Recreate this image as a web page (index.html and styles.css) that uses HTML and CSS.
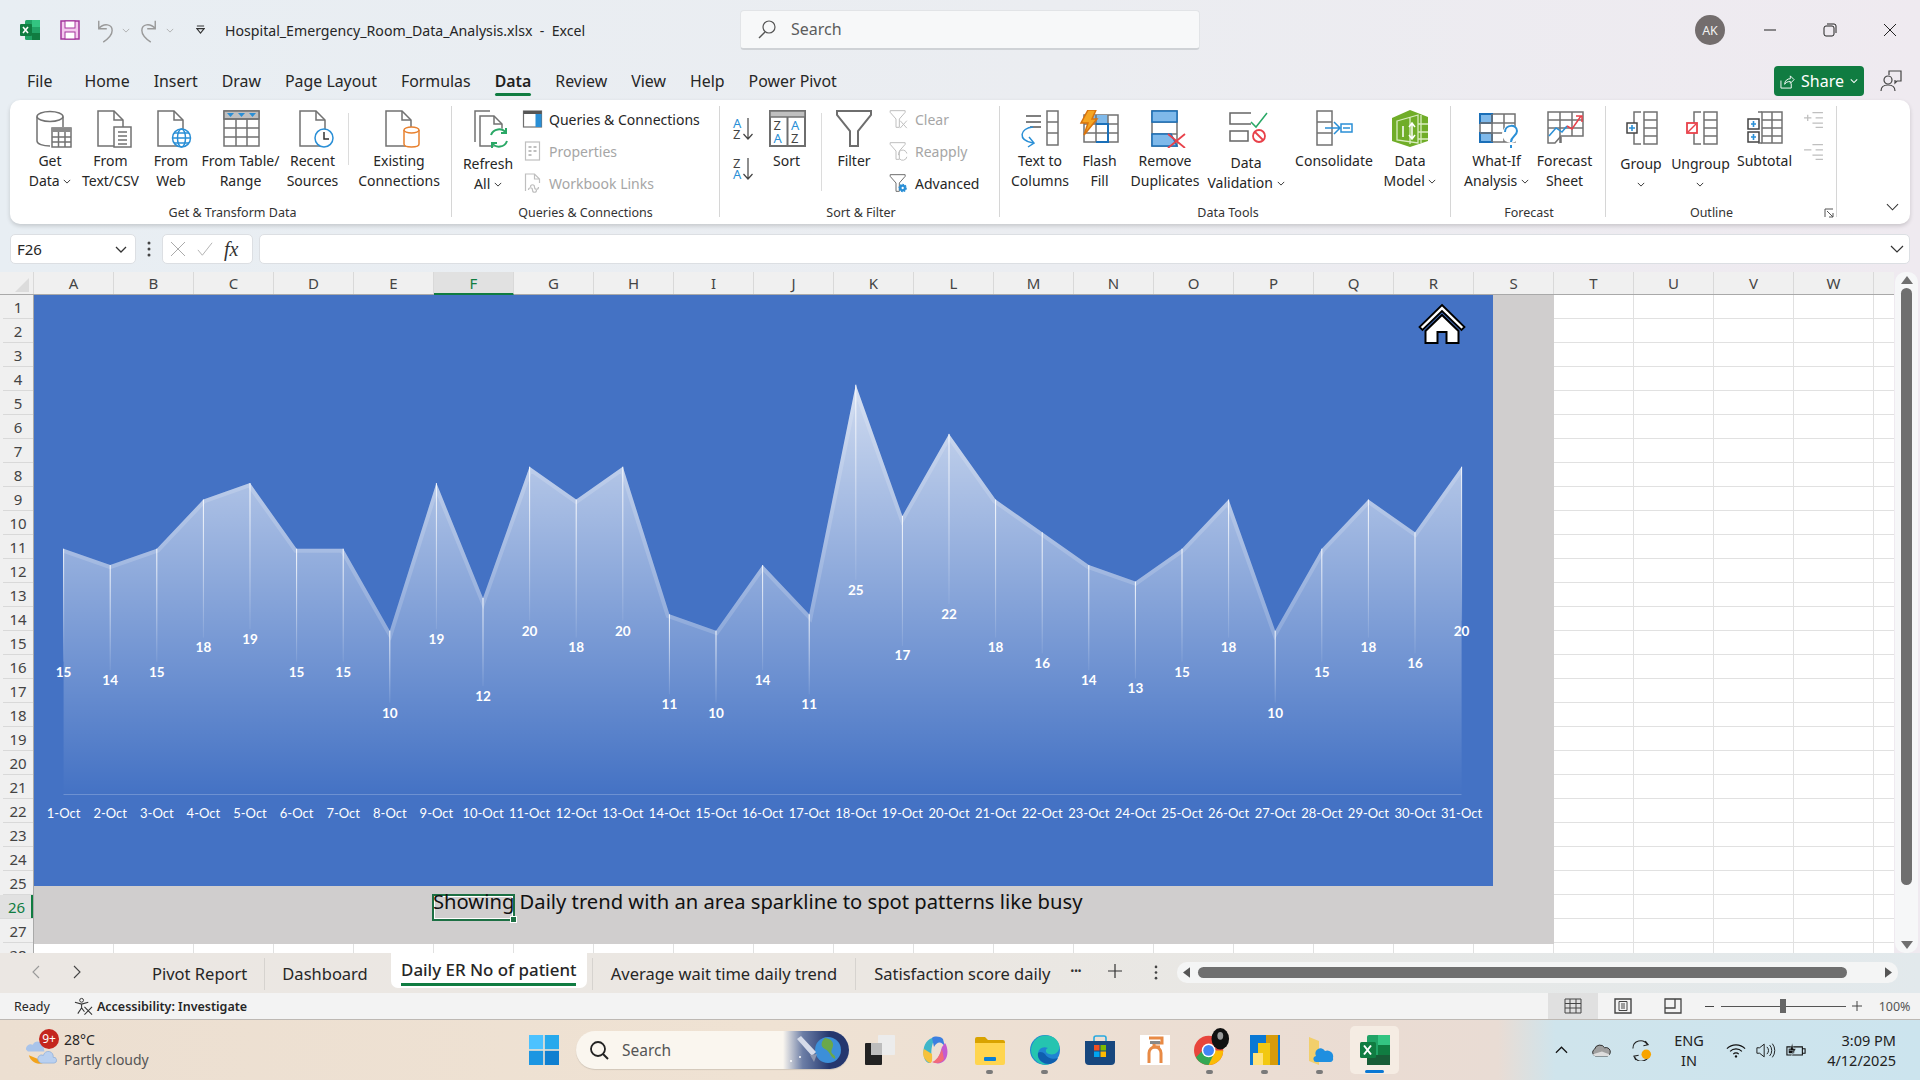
FILE: index.html
```html
<!DOCTYPE html>
<html lang="en">
<head>
<meta charset="utf-8">
<title>Hospital_Emergency_Room_Data_Analysis.xlsx - Excel</title>
<link rel="stylesheet" href="styles.css">
</head>
<body>
<svg class="defs" aria-hidden="true">
  <symbol id="doc" viewBox="0 0 44 38"><path class="w" d="M9 1H25L34 10V36H9Z"/><path d="M25 1V10H34"/></symbol>
  <symbol id="funnel" viewBox="0 0 24 24"><path d="M2 2H20V4L13 12V22H9V12L2 4Z"/></symbol>
  <linearGradient id="areaFill" x1="0" y1="0" x2="0" y2="1"><stop offset="0" stop-color="#fff" stop-opacity=".74"/><stop offset="1" stop-color="#fff" stop-opacity="0"/></linearGradient>
  <linearGradient id="dropFill" x1="0" y1="0" x2="0" y2="1"><stop offset="0" stop-color="#fff" stop-opacity=".95"/><stop offset="1" stop-color="#fff" stop-opacity=".08"/></linearGradient>
  <linearGradient id="spaceFill" x1="0" y1="0" x2="1" y2="0"><stop offset="0" stop-color="#2f4a86" stop-opacity="0"/><stop offset=".3" stop-color="#2f4a86" stop-opacity=".7"/><stop offset=".7" stop-color="#25376e"/></linearGradient>
  <clipPath id="areaClip"><polygon points="63.1,794.7 63.1,548.7 109.7,565.1 156.3,548.7 202.9,499.5 249.5,483.1 296.1,548.7 342.7,548.7 389.3,630.7 435.9,483.1 482.5,597.9 529.1,466.7 575.7,499.5 622.3,466.7 668.9,614.3 715.5,630.7 762.1,565.1 808.7,614.3 855.3,384.7 901.9,515.9 948.5,433.9 995.1,499.5 1041.7,532.3 1088.3,565.1 1134.9,581.5 1181.5,548.7 1228.1,499.5 1274.7,630.7 1321.3,548.7 1367.9,499.5 1414.5,532.3 1461.1,466.7 1461.1,794.7"/></clipPath>
</svg>

<header class="titlebar">
  <div class="qat">
    <svg class="q-xl" viewBox="0 0 20 20"><rect x="5" y="0" width="15" height="20" rx="1.5" fill="#21a366"/><rect x="12" y="0" width="8" height="7" fill="#33c481"/><rect x="12" y="13" width="8" height="7" fill="#107c41"/><rect x="0" y="4" width="12" height="12" rx="1" fill="#107c41"/><path d="M3 7l5 6M8 7l-5 6" stroke="#fff" stroke-width="1.6"/></svg>
    <svg class="q-save" viewBox="0 0 20 20"><path d="M1 1H19V19H1Z" fill="#f3c9ee" stroke="#a4359c" stroke-width="1.5"/><rect x="5" y="1" width="10" height="7" fill="#fff" stroke="#a4359c"/><rect x="5" y="12" width="10" height="7" fill="#fff" stroke="#a4359c"/></svg>
    <svg class="q-undo" viewBox="0 0 22 28"><path d="M4 3V12H13M4 12C10 5 19 7 19 14C19 19 15 23 9 27" fill="none" stroke="#9a9a9a" stroke-width="1.6"/></svg>
    <svg class="q-chev" viewBox="0 0 10 6"><path d="M1 1L5 5L9 1" fill="none" stroke="#a5a5a5"/></svg>
    <svg class="q-redo" viewBox="0 0 22 28"><path d="M18 3V12H9M18 12C12 5 3 7 3 14C3 19 7 23 13 27" fill="none" stroke="#9a9a9a" stroke-width="1.6"/></svg>
    <svg class="q-chev q-chev2" viewBox="0 0 10 6"><path d="M1 1L5 5L9 1" fill="none" stroke="#a5a5a5"/></svg>
    <svg class="q-cust" viewBox="0 0 10 11"><path d="M1 1H9M1 4L5 9L9 4Z" fill="none" stroke="#333" stroke-width="1.2"/></svg>
    <span class="doc-title">Hospital_Emergency_Room_Data_Analysis.xlsx&nbsp; -&nbsp; Excel</span>
  </div>
  <div class="searchbox">
    <svg viewBox="0 0 20 20"><circle cx="12" cy="8" r="6" fill="none" stroke="#555" stroke-width="1.2"/><path d="M8 13L2 19" stroke="#555" stroke-width="1.4"/></svg>
    <span>Search</span>
  </div>
  <div class="winctl">
    <span class="avatar">AK</span>
    <span class="wbtn"><svg viewBox="0 0 14 14"><path d="M1 7H13" stroke="#222"/></svg></span>
    <span class="wbtn"><svg viewBox="0 0 14 14"><rect x="1" y="3" width="10" height="10" rx="2" fill="none" stroke="#222"/><path d="M4 1H11A2 2 0 0 1 13 3V10" fill="none" stroke="#222"/></svg></span>
    <span class="wbtn"><svg viewBox="0 0 14 14"><path d="M1 1L13 13M13 1L1 13" stroke="#222"/></svg></span>
  </div>
</header>

<nav class="tabrow">
  <span class="file">File</span><span>Home</span><span>Insert</span><span>Draw</span><span>Page Layout</span><span>Formulas</span><span class="cur">Data</span><span>Review</span><span>View</span><span>Help</span><span>Power Pivot</span>
  <span class="share"><svg viewBox="0 0 16 16"><path d="M1 7V15H12V10M5 11C5 7 8 5 11 5V2L15 6L11 10V8C8 8 6 9 5 11Z" fill="none" stroke="#fff"/></svg>Share<svg class="s-chev" viewBox="0 0 10 6"><path d="M1 1L5 5L9 1" fill="none" stroke="#fff" stroke-width="1.3"/></svg></span>
  <svg class="comment" viewBox="0 0 22 22"><circle cx="8" cy="10" r="4" fill="none" stroke="#444" stroke-width="1.2"/><path d="M1 21C1 16 4 15 8 15S15 16 15 21M9 5V1H21V11H17L15 13V10" fill="none" stroke="#444" stroke-width="1.2"/></svg>
</nav>

<section class="ribbon">
  <div class="grp g1">
    <div class="grp-body">
      <div class="btn b60"><svg class="i" viewBox="0 0 44 38"><ellipse class="w" cx="22" cy="6.5" rx="13" ry="5"/><path d="M9 6.5V31C9 34 15 36 22 36M35 6.5V17"/><rect class="w" x="24" y="18" width="19" height="19"/><rect class="fg" x="24" y="18" width="19" height="4"/><path d="M24 27H43M24 32H43M30.5 22V37M37 22V37"/></svg><span>Get<br>Data <svg class="chev" viewBox="0 0 10 6"><path d="M1 1L5 5L9 1"/></svg></span></div>
      <div class="btn b61"><svg class="i" viewBox="0 0 44 38"><use href="#doc"/><rect class="w" x="25" y="17" width="17" height="20"/><path d="M29 22H38M29 26H38M29 30H38M29 34H38"/></svg><span>From<br>Text/CSV</span></div>
      <div class="btn b60"><svg class="i" viewBox="0 0 44 38"><use href="#doc"/><circle class="w bl" cx="32.5" cy="28" r="9"/><ellipse class="bl" cx="32.5" cy="28" rx="4" ry="9"/><path class="bl" d="M23.5 28H41.5M25 23H40M25 33H40"/></svg><span>From<br>Web</span></div>
      <div class="btn b79"><svg class="i" viewBox="0 0 44 38"><rect class="w" x="5" y="1" width="35" height="35"/><rect class="fg2" x="5" y="1" width="35" height="8"/><path d="M5 9H40M5 18H40M5 27H40M17 9V36M28 9V36"/><path class="fbl" d="M8 3H15L11.5 7ZM19 3H26L22.5 7ZM30 3H37L33.5 7Z"/></svg><span>From Table/<br>Range</span></div>
      <div class="btn b65"><svg class="i" viewBox="0 0 44 38"><use href="#doc"/><circle class="w bl" cx="33" cy="28" r="9"/><path d="M33 22V29H38" stroke="#333"/></svg><span>Recent<br>Sources</span></div>
      <i class="vsep s-a"></i>
      <div class="btn b94"><svg class="i" viewBox="0 0 44 38"><use href="#doc"/><path class="w or" d="M27 20V34C27 38 42 38 42 34V20"/><ellipse class="w or" cx="34.5" cy="20" rx="7.5" ry="3"/></svg><span>Existing<br>Connections</span></div>
    </div>
    <div class="grp-name">Get &amp; Transform Data</div>
  </div>
  <div class="grp g2">
    <div class="grp-body">
      <div class="btn b60 lo"><svg class="i" viewBox="0 0 44 38"><path d="M9 32V1H24"/><path class="w" d="M14 6H28L36 14V36H14Z"/><path d="M28 6V14H36"/><circle class="w" cx="33" cy="28" r="10" stroke="none"/><path class="gr" d="M25 25A8.5 8.5 0 0 1 40 23M41 31A8.5 8.5 0 0 1 26 33M40 18V23H35M26 38V33H31"/></svg><span>Refresh<br>All <svg class="chev" viewBox="0 0 10 6"><path d="M1 1L5 5L9 1"/></svg></span></div>
      <div class="smalls">
        <div class="sm"><svg class="si" viewBox="0 0 20 20"><rect class="w" x="1" y="2" width="18" height="16"/><rect class="fd" x="1" y="2" width="18" height="3"/><rect class="fbl" x="13" y="5" width="6" height="13"/></svg><span>Queries &amp; Connections</span></div>
        <div class="sm off"><svg class="si" viewBox="0 0 20 20"><rect class="lt" x="3" y="1" width="14" height="18"/><path class="lt" d="M6 6H9M6 10H9M6 14H9M11 6H14M11 10H14" stroke-width="2"/></svg><span>Properties</span></div>
        <div class="sm off"><svg class="si" viewBox="0 0 20 20"><path class="lt" d="M3 18V1H12L17 6V10M12 1V6H17"/><path class="lt" d="M8 14C8 11 12 11 12 14S16 17 16 14M6 17C6 14 10 14 10 17S14 20 14 17"/></svg><span>Workbook Links</span></div>
      </div>
    </div>
    <div class="grp-name">Queries &amp; Connections</div>
  </div>
  <div class="grp g3">
    <div class="grp-body">
      <div class="sortcol">
        <svg class="sz" viewBox="0 0 24 22"><text x="1"><tspan class="tb" x="1" y="10">A</tspan><tspan class="td" x="1" y="21">Z</tspan></text><path d="M16 0V21M11.500 16L16 21L20.500 16" stroke="#444" stroke-width="1.200"/></svg>
        <svg class="sz" viewBox="0 0 24 22"><text x="1"><tspan class="td" x="1" y="10">Z</tspan><tspan class="tb" x="1" y="21">A</tspan></text><path d="M16 0V21M11.500 16L16 21L20.500 16" stroke="#444" stroke-width="1.200"/></svg>
      </div>
      <div class="btn b55"><svg class="i sorti" viewBox="0 0 44 38"><rect class="w thick" x="5" y="1" width="35" height="35"/><rect class="fg2" x="5" y="1" width="35" height="6"/><path class="thick" d="M22.5 7V36"/><text><tspan class="td" x="8.500" y="20">Z</tspan><tspan class="tb" x="8.500" y="33">A</tspan></text><text><tspan class="tb" x="26" y="20">A</tspan><tspan class="td" x="26" y="33">Z</tspan></text></svg><span>Sort</span></div>
      <i class="vsep s-b"></i>
      <div class="btn b50"><svg class="i" viewBox="0 0 44 38"><path class="w thick" d="M5 1H39V5L26 21V36H18V21L5 5Z"/></svg><span>Filter</span></div>
      <div class="smalls">
        <div class="sm off"><svg class="si" viewBox="0 0 24 24"><use href="#funnel" class="lt"/><path class="lt" d="M14 14L22 23M22 14L14 23"/></svg><span>Clear</span></div>
        <div class="sm off"><svg class="si" viewBox="0 0 24 24"><use href="#funnel" class="lt"/><path class="lt" d="M12 17A5 5 0 0 1 22 15M22 19A5 5 0 0 1 13 21"/></svg><span>Reapply</span></div>
        <div class="sm"><svg class="si" viewBox="0 0 24 24"><use href="#funnel"/><circle cx="17" cy="18" r="4" fill="#2a8fd6" stroke="#2a8fd6" stroke-width="2" stroke-dasharray="2 1"/><circle cx="17" cy="18" r="1.4" fill="#fff" stroke="none"/></svg><span class="dk">Advanced</span></div>
      </div>
    </div>
    <div class="grp-name">Sort &amp; Filter</div>
  </div>
  <div class="grp g4">
    <div class="grp-body">
      <div class="btn b56"><svg class="i" viewBox="0 0 44 38"><path d="M8 6H23M8 12H23M12 17H23" stroke="#555"/><rect class="w" x="29" y="1" width="11" height="34"/><path d="M29 12H40M29 23H40"/><path class="fbl" d="M32 6H37M32 17H37M32 29H37" stroke="#2a8fd6"/><path class="bl" d="M15 17C2 18 -1 30 15 33M10 37L16 33L11 27" fill="none"/></svg><span>Text to<br>Columns</span></div>
      <div class="btn b63"><svg class="i" viewBox="0 0 44 38"><rect class="w" x="6" y="5" width="34" height="27"/><rect class="fl" x="14" y="5" width="16" height="9"/><path d="M6 14H40M6 23H40M18 5V32M30 5V32"/><path d="M18 14H30V32H18" stroke="#1a6fb8" stroke-width="2"/><path d="M10 0H18L14 9H19L6 25L10 13H3Z" fill="#f5a623" stroke="#d9730d"/></svg><span>Flash<br>Fill</span></div>
      <div class="btn b68"><svg class="i" viewBox="0 0 44 38"><rect class="w" x="9" y="1" width="25" height="35"/><path d="M9 12H34M9 24H34"/><rect x="9" y="1" width="25" height="11" fill="#7fb9ea" stroke="#1a6fb8"/><path d="M9 24H28L34 36H9Z" fill="#7fb9ea" stroke="#1a6fb8"/><path d="M25 24L42 38M42 24L25 38" stroke="#e8414a" stroke-width="1.8"/></svg><span>Remove<br>Duplicates</span></div>
      <div class="btn b94 lo2"><svg class="i" viewBox="0 0 44 38"><path d="M27 14H6V3H27M6 21H24V31H6Z" stroke="#666"/><path d="M27 12L32 17L43 3" stroke="#29a866"/><circle class="w" cx="35" cy="26" r="6" stroke="#e8414a" stroke-width="1.8"/><path d="M31 22L39 30" stroke="#e8414a" stroke-width="1.8"/></svg><span>Data<br>Validation <svg class="chev" viewBox="0 0 10 6"><path d="M1 1L5 5L9 1"/></svg></span></div>
      <div class="btn b82"><svg class="i" viewBox="0 0 44 38"><rect class="w" x="5" y="1" width="15" height="34"/><path d="M5 12H20M5 23H20"/><path class="bl" d="M13 18H27M22 12L28 18L22 24"/><rect class="w bl" x="29" y="14" width="11" height="8"/><path class="bl" d="M31 18H38"/></svg><span>Consolidate</span></div>
      <div class="btn b70"><svg class="i" viewBox="0 0 44 38"><path d="M4 8L22 0L40 7V31L22 37L4 31Z" fill="#70ad28" stroke="none"/><path d="M9 11L30 5V33L9 30ZM30 14H40M30 22H40M30 29H40M33 5V33M22 7V34" stroke="#d9edbf" stroke-width="1.3"/><path d="M15 16V27M24 14V28M21 17L24 13L27 17M21 25L24 29L27 25" stroke="#fff"/></svg><span>Data<br>Model <svg class="chev" viewBox="0 0 10 6"><path d="M1 1L5 5L9 1"/></svg></span></div>
    </div>
    <div class="grp-name">Data Tools</div>
  </div>
  <div class="grp g5">
    <div class="grp-body">
      <div class="btn b75"><svg class="i" viewBox="0 0 44 38"><rect class="w" x="5" y="4" width="35" height="28"/><rect x="5" y="4" width="12" height="9" fill="#7fb9ea" stroke="#1a6fb8" stroke-width="2"/><rect x="5" y="23" width="12" height="9" fill="#7fb9ea" stroke="#1a6fb8" stroke-width="2"/><path d="M5 13H40M5 23H40M17 4V32M29 4V32"/><circle class="w" cx="36" cy="24" r="9" stroke="none"/><path class="bl" d="M30 22C30 14 42 14 42 21C42 26 36 26 36 32M36 35V38" stroke-width="2"/></svg><span>What-If<br>Analysis <svg class="chev" viewBox="0 0 10 6"><path d="M1 1L5 5L9 1"/></svg></span></div>
      <div class="btn b61"><svg class="i" viewBox="0 0 44 38"><path class="w" d="M5 2H40V26H18L12 33H5Z"/><path d="M5 10H40M5 18H40M17 2V33M29 2V26M18 33V27"/><path class="bl" d="M6 26L13 18L19 22L24 16"/><path d="M24 16L29 19L38 6M33 6H39V12" stroke="#e8414a"/></svg><span>Forecast<br>Sheet</span></div>
    </div>
    <div class="grp-name">Forecast</div>
  </div>
  <div class="grp g6">
    <div class="grp-body">
      <div class="btn b56 lo3"><svg class="i" viewBox="0 0 44 38"><rect class="w" x="25" y="2" width="13" height="32"/><path d="M25 10H38M25 18H38M25 26H38M22 2H15V13M15 23V34H22"/><rect class="w" x="8" y="13" width="10" height="10" stroke="#444"/><path class="bl" d="M13 15V21M10 18H16" stroke-width="1.6"/></svg><span>Group<br><svg class="chev" viewBox="0 0 10 6"><path d="M1 1L5 5L9 1"/></svg></span></div>
      <div class="btn b63 lo3"><svg class="i" viewBox="0 0 44 38"><rect class="w" x="25" y="2" width="13" height="32"/><path d="M25 10H38M25 18H38M25 26H38M22 2H15V13M15 23V34H22"/><rect class="w" x="8" y="13" width="10" height="10" stroke="#e8414a" stroke-width="1.8"/><path d="M9 22L17 14" stroke="#e8414a"/></svg><span>Ungroup<br><svg class="chev" viewBox="0 0 10 6"><path d="M1 1L5 5L9 1"/></svg></span></div>
      <div class="btn b65"><svg class="i" viewBox="0 0 44 38"><rect class="w" x="19" y="2" width="20" height="31"/><path d="M19 10H39M19 18H39M19 26H39M29 2V33M15 2H19M15 33H19"/><rect class="w" x="5" y="9" width="11" height="10" stroke="#444"/><rect class="w" x="5" y="22" width="11" height="10" stroke="#444"/><path class="bl" d="M10.500 11V17M8 14H13M10.500 24V30M8 27H13" stroke-width="1.6"/></svg><span>Subtotal</span></div>
      <div class="outl">
        <svg class="si" viewBox="0 0 20 18"><path class="lt" d="M1 7H8M4.500 4V10M9 2H19M12 7H19M9 12H19M12 16H19"/></svg>
        <svg class="si" viewBox="0 0 20 18"><path class="lt" d="M1 7H8M9 2H19M12 7H19M9 12H19M12 16H19"/></svg>
      </div>
    </div>
    <div class="grp-name">Outline<svg class="launch" viewBox="0 0 10 10"><path d="M1 9V1H9M3 3L9 9M9 5V9H5" fill="none" stroke="#555"/></svg></div>
  </div>
  <svg class="collapse" viewBox="0 0 14 8"><path d="M1 1L7 7L13 1" fill="none" stroke="#333" stroke-width="1.1"/></svg>
</section>

<section class="fbar">
  <div class="namebox"><span>F26</span><svg viewBox="0 0 12 7"><path d="M1 1L6 6L11 1" fill="none" stroke="#333" stroke-width="1.3"/></svg></div>
  <svg class="kebab" viewBox="0 0 4 16"><circle cx="2" cy="2" r="1.500" fill="#444"/><circle cx="2" cy="8" r="1.500" fill="#444"/><circle cx="2" cy="14" r="1.500" fill="#444"/></svg>
  <div class="fxbox">
    <svg viewBox="0 0 16 16"><path d="M1 1L15 15M15 1L1 15" stroke="#aaa"/></svg>
    <svg viewBox="0 0 18 16"><path d="M1 9L6 15L17 1" fill="none" stroke="#aaa"/></svg>
    <span>fx</span>
  </div>
  <div class="finput"><svg viewBox="0 0 14 8"><path d="M1 1L7 7L13 1" fill="none" stroke="#333" stroke-width="1.2"/></svg></div>
</section>

<main class="sheet">
  <div class="sheetmain">
    <div class="colhead">
      <div class="corner"><svg viewBox="0 0 14 14"><path d="M14 0V14H0Z" fill="#dcdcdc"/></svg></div>
      <span>A</span><span>B</span><span>C</span><span>D</span><span>E</span><span class="sel">F</span><span>G</span><span>H</span><span>I</span><span>J</span><span>K</span><span>L</span><span>M</span><span>N</span><span>O</span><span>P</span><span>Q</span><span>R</span><span>S</span><span>T</span><span>U</span><span>V</span><span>W</span><span class="rest"></span>
    </div>
    <div class="bodyrow">
      <div class="rowhead">
        <span>1</span><span>2</span><span>3</span><span>4</span><span>5</span><span>6</span><span>7</span><span>8</span><span>9</span><span>10</span><span>11</span><span>12</span><span>13</span><span>14</span><span>15</span><span>16</span><span>17</span><span>18</span><span>19</span><span>20</span><span>21</span><span>22</span><span>23</span><span>24</span><span>25</span><span class="sel">26</span><span>27</span><span>28</span>
      </div>
      <div class="cells">
        <div class="greypanel"></div>
        <svg class="chart" viewBox="33.500 295 1459 591">
          <polygon fill="url(#areaFill)" points="63.1,794.7 63.1,548.7 109.7,565.1 156.3,548.7 202.9,499.5 249.5,483.1 296.1,548.7 342.7,548.7 389.3,630.7 435.9,483.1 482.5,597.9 529.1,466.7 575.7,499.5 622.3,466.7 668.9,614.3 715.5,630.7 762.1,565.1 808.7,614.3 855.3,384.7 901.9,515.9 948.5,433.9 995.1,499.5 1041.7,532.3 1088.3,565.1 1134.9,581.5 1181.5,548.7 1228.1,499.5 1274.7,630.7 1321.3,548.7 1367.9,499.5 1414.5,532.3 1461.1,466.7 1461.1,794.7"/>
          <polyline class="edge" clip-path="url(#areaClip)" points="63.1,548.7 109.7,565.1 156.3,548.7 202.9,499.5 249.5,483.1 296.1,548.7 342.7,548.7 389.3,630.7 435.9,483.1 482.5,597.9 529.1,466.7 575.7,499.5 622.3,466.7 668.9,614.3 715.5,630.7 762.1,565.1 808.7,614.3 855.3,384.7 901.9,515.9 948.5,433.9 995.1,499.5 1041.7,532.3 1088.3,565.1 1134.9,581.5 1181.5,548.7 1228.1,499.5 1274.7,630.7 1321.3,548.7 1367.9,499.5 1414.5,532.3 1461.1,466.7"/>
          <path class="base" d="M63 794.500H1461"/>
          <g fill="url(#dropFill)">
            <rect x="62.600" y="548.700" width="1" height="113"/><rect x="109.200" y="565.100" width="1" height="105"/><rect x="155.800" y="548.700" width="1" height="113"/><rect x="202.400" y="499.500" width="1" height="138"/><rect x="249" y="483.100" width="1" height="146"/><rect x="295.600" y="548.700" width="1" height="113"/><rect x="342.200" y="548.700" width="1" height="113"/><rect x="388.800" y="630.700" width="1" height="72"/><rect x="435.400" y="483.100" width="1" height="146"/><rect x="482" y="597.900" width="1" height="88"/><rect x="528.600" y="466.700" width="1" height="154"/><rect x="575.200" y="499.500" width="1" height="138"/><rect x="621.800" y="466.700" width="1" height="154"/><rect x="668.400" y="614.300" width="1" height="80"/><rect x="715" y="630.700" width="1" height="72"/><rect x="761.600" y="565.100" width="1" height="105"/><rect x="808.200" y="614.300" width="1" height="80"/><rect x="854.800" y="384.700" width="1" height="195"/><rect x="901.400" y="515.900" width="1" height="130"/><rect x="948" y="433.900" width="1" height="170"/><rect x="994.600" y="499.500" width="1" height="138"/><rect x="1041.200" y="532.300" width="1" height="121"/><rect x="1087.800" y="565.100" width="1" height="105"/><rect x="1134.400" y="581.500" width="1" height="97"/><rect x="1181" y="548.700" width="1" height="113"/><rect x="1227.600" y="499.500" width="1" height="138"/><rect x="1274.200" y="630.700" width="1" height="72"/><rect x="1320.800" y="548.700" width="1" height="113"/><rect x="1367.400" y="499.500" width="1" height="138"/><rect x="1414" y="532.300" width="1" height="121"/><rect x="1460.600" y="466.700" width="1" height="154"/>
          </g>
          <g class="vals">
            <text x="63.100" y="676.500">15</text><text x="109.700" y="684.700">14</text><text x="156.300" y="676.500">15</text><text x="202.900" y="651.900">18</text><text x="249.500" y="643.700">19</text><text x="296.100" y="676.500">15</text><text x="342.700" y="676.500">15</text><text x="389.300" y="717.500">10</text><text x="435.900" y="643.700">19</text><text x="482.500" y="701.100">12</text><text x="529.100" y="635.500">20</text><text x="575.700" y="651.900">18</text><text x="622.300" y="635.500">20</text><text x="668.900" y="709.300">11</text><text x="715.500" y="717.500">10</text><text x="762.100" y="684.700">14</text><text x="808.700" y="709.300">11</text><text x="855.300" y="594.500">25</text><text x="901.900" y="660.100">17</text><text x="948.500" y="619.100">22</text><text x="995.100" y="651.900">18</text><text x="1041.700" y="668.300">16</text><text x="1088.300" y="684.700">14</text><text x="1134.900" y="692.900">13</text><text x="1181.500" y="676.500">15</text><text x="1228.100" y="651.900">18</text><text x="1274.700" y="717.500">10</text><text x="1321.300" y="676.500">15</text><text x="1367.900" y="651.900">18</text><text x="1414.500" y="668.300">16</text><text x="1461.100" y="635.500">20</text>
          </g>
          <g class="dates">
            <text x="63.100" y="817.500">1-Oct</text><text x="109.700" y="817.500">2-Oct</text><text x="156.300" y="817.500">3-Oct</text><text x="202.900" y="817.500">4-Oct</text><text x="249.500" y="817.500">5-Oct</text><text x="296.100" y="817.500">6-Oct</text><text x="342.700" y="817.500">7-Oct</text><text x="389.300" y="817.500">8-Oct</text><text x="435.900" y="817.500">9-Oct</text><text x="482.500" y="817.500">10-Oct</text><text x="529.100" y="817.500">11-Oct</text><text x="575.700" y="817.500">12-Oct</text><text x="622.300" y="817.500">13-Oct</text><text x="668.900" y="817.500">14-Oct</text><text x="715.500" y="817.500">15-Oct</text><text x="762.100" y="817.500">16-Oct</text><text x="808.700" y="817.500">17-Oct</text><text x="855.300" y="817.500">18-Oct</text><text x="901.900" y="817.500">19-Oct</text><text x="948.500" y="817.500">20-Oct</text><text x="995.100" y="817.500">21-Oct</text><text x="1041.700" y="817.500">22-Oct</text><text x="1088.300" y="817.500">23-Oct</text><text x="1134.900" y="817.500">24-Oct</text><text x="1181.500" y="817.500">25-Oct</text><text x="1228.100" y="817.500">26-Oct</text><text x="1274.700" y="817.500">27-Oct</text><text x="1321.300" y="817.500">28-Oct</text><text x="1367.900" y="817.500">29-Oct</text><text x="1414.500" y="817.500">30-Oct</text><text x="1461.100" y="817.500">31-Oct</text>
          </g>
          <g class="home"><path d="M1441.500 305L1464 327L1461 330L1441.500 311L1422 330L1419 327Z" fill="#fff" stroke="#000" stroke-width="1.800"/><path d="M1425 331V343H1437V332H1446V343H1458V331L1441.500 315Z" fill="#fff" stroke="#000" stroke-width="2"/></g>
        </svg>
        <div class="cellsel"><i></i></div>
        <div class="note">Showing Daily trend with an area sparkline to spot patterns like busy</div>
      </div>
    </div>
  </div>
  <aside class="vscroll">
    <svg viewBox="0 0 12 8"><path d="M6 0L12 8H0Z" fill="#6f6f6f"/></svg>
    <div class="vthumb"></div>
    <svg viewBox="0 0 12 8"><path d="M6 8L12 0H0Z" fill="#6f6f6f"/></svg>
  </aside>
</main>

<section class="sheettabs">
  <div class="tabnav">
    <svg viewBox="0 0 8 14"><path d="M7 1L1 7L7 13" fill="none" stroke="#999" stroke-width="1.1"/></svg>
    <svg viewBox="0 0 8 14"><path d="M1 1L7 7L1 13" fill="none" stroke="#444" stroke-width="1.1"/></svg>
  </div>
  <span class="stab t1">Pivot Report</span>
  <span class="stab t2">Dashboard</span>
  <span class="stab active"><b>Daily ER No of patient</b></span>
  <span class="stab t4">Average wait time daily trend</span>
  <span class="stab t5">Satisfaction score daily</span>
  <span class="more">•••</span>
  <svg class="plus" viewBox="0 0 14 14"><path d="M7 0V14M0 7H14" stroke="#333" stroke-width="1.2"/></svg>
  <svg class="kebab2" viewBox="0 0 4 16"><circle cx="2" cy="2" r="1.400" fill="#444"/><circle cx="2" cy="8" r="1.400" fill="#444"/><circle cx="2" cy="14" r="1.400" fill="#444"/></svg>
  <div class="hscroll">
    <svg viewBox="0 0 8 12"><path d="M0 6L8 0V12Z" fill="#555"/></svg>
    <div class="hthumb"></div>
    <svg viewBox="0 0 8 12"><path d="M8 6L0 0V12Z" fill="#555"/></svg>
  </div>
</section>

<footer class="status">
  <span class="ready">Ready</span>
  <svg class="acc" viewBox="0 0 20 18"><circle cx="8" cy="3" r="2" fill="none" stroke="#333"/><path d="M1 5L8 7L15 5M8 7V11L4 17M8 11L11 15M11 10L19 18M19 10L11 18" fill="none" stroke="#333" stroke-width="1.100"/></svg>
  <span class="accx">Accessibility: Investigate</span>
  <div class="views">
    <span class="view on"><svg viewBox="0 0 18 16"><path d="M1 1H17V15H1ZM1 5.500H17M1 10H17M6 1V15M12 1V15" fill="none" stroke="#444"/></svg></span>
    <span class="view"><svg viewBox="0 0 18 16"><path d="M1 1H17V15H1Z" fill="none" stroke="#444" stroke-width="1.400"/><path d="M5 3.500H13V12.500H5ZM7 6H11M7 8H11M7 10H11" fill="none" stroke="#444"/></svg></span>
    <span class="view"><svg viewBox="0 0 18 16"><path d="M1 1H17V15H1ZM1 10H11V1" fill="none" stroke="#444" stroke-width="1.300"/></svg></span>
  </div>
  <div class="zoomer">
    <i class="zm"></i>
    <div class="ztrack"><i></i></div>
    <svg viewBox="0 0 10 10"><path d="M5 0V10M0 5H10" stroke="#444"/></svg>
    <span>100%</span>
  </div>
</footer>

<footer class="taskbar">
  <div class="weather">
    <svg class="wx" viewBox="0 0 34 34"><path d="M1 16A5 5 0 0 1 8 11A6 6 0 0 1 19 12L20 18H3Z" fill="#a9c4ea"/><path d="M4 22C6 30 16 34 22 27L14 26Z" fill="#f2a31b"/><path d="M14 28A4 4 0 0 1 19 22A5 5 0 0 1 29 24A3 3 0 0 1 30 30H16Z" fill="#b9d0f0" stroke="#7da3d6" stroke-width=".6"/></svg>
    <span class="badge">9+</span>
    <div class="wtxt"><span>28°C</span><span class="wsub">Partly cloudy</span></div>
  </div>
  <span class="tico"><svg viewBox="0 0 30 30"><rect width="14.200" height="14.200" fill="#4cc2ff"/><rect x="15.800" width="14.200" height="14.200" fill="#27a9ec"/><rect y="15.800" width="14.200" height="14.200" fill="#1c96e2"/><rect x="15.800" y="15.800" width="14.200" height="14.200" fill="#0f7fd0"/></svg></span>
  <div class="tsearch">
    <svg viewBox="0 0 20 20"><circle cx="9" cy="9" r="7" fill="none" stroke="#222" stroke-width="1.800"/><path d="M14 14L19 19" stroke="#222" stroke-width="2"/></svg>
    <span>Search</span>
    <div class="space"><svg viewBox="0 0 66 38"><rect width="66" height="38" fill="url(#spaceFill)"/><circle cx="45" cy="19" r="13" fill="#3c8fd8"/><path d="M42 7C49 8 52 12 49 18S54 23 52 28C47 26 47 20 42 18S38 10 42 7Z" fill="#6aa84a"/><path d="M14 8L29 25L33 21L18 5Z" fill="#d6dcea"/><path d="M27 24L31 31L34 23Z" fill="#8d96ad"/><circle cx="8" cy="30" r="1" fill="#fff"/><circle cx="17" cy="26" r="1" fill="#fff"/></svg></div>
  </div>
  <span class="tico"><svg viewBox="0 0 30 30"><rect x="13" y="0" width="17" height="20" rx="1" fill="#ececec"/><rect x="0" y="8" width="17" height="22" rx="1" fill="#222"/><rect x="6" y="8" width="11" height="12" fill="#bdbdbd"/></svg></span>
  <span class="tico"><svg viewBox="0 0 30 30"><path d="M4 22C2 12 6 5 12 3L16 2C13 6 10 14 12 24L10 28C7 28 5 26 4 22Z" fill="#3fb6c9"/><path d="M12 3C14 1 20 1 23 4L25 12C22 6 17 6 14 12Z" fill="#3c7fe0"/><path d="M25 8C28 12 29 22 24 26C21 29 16 29 13 27C18 27 20 18 22 12Z" fill="#c45bd0"/><path d="M4 14C2 18 3 25 10 28C13 28 12 22 12 19Z" fill="#f6c13b"/><path d="M22 14L24 24C22 28 16 29 12 27C16 26 20 20 22 14Z" fill="#f26b7a"/></svg></span>
  <span class="tico dot"><svg viewBox="0 0 30 30"><path d="M0 4A2 2 0 0 1 2 2H10L13 5H28A2 2 0 0 1 30 7V9H0Z" fill="#d9a300"/><path d="M0 8H30V28A2 2 0 0 1 28 30H2A2 2 0 0 1 0 28Z" fill="#ffd54f"/><rect x="9" y="22" width="12" height="4" rx="1" fill="#0a7fd6"/></svg></span>
  <span class="tico dot"><svg viewBox="0 0 30 30"><circle cx="15" cy="15" r="15" fill="#1f84d2"/><path d="M3 8C8 -2 25 -2 29 9C31 16 25 21 19 19C15 18 15 14 18 13C13 11 9 13 8 18C7 24 12 30 20 29C9 33 -4 20 3 8Z" fill="#25c4b0"/><path d="M8 18C7 24 12 29 20 29C24 28 27 26 28 23C23 25 17 23 15 19C13 17 10 16 8 18Z" fill="#0f5fae"/></svg></span>
  <span class="tico"><svg viewBox="0 0 30 30"><path d="M9 6V3A2 2 0 0 1 11 1H19A2 2 0 0 1 21 3V6" fill="none" stroke="#28a9e0" stroke-width="1.600"/><path d="M0 6H30V26A4 4 0 0 1 26 30H4A4 4 0 0 1 0 26Z" fill="#17477e"/><rect x="9" y="10" width="5.500" height="5.500" fill="#f25022"/><rect x="15.500" y="10" width="5.500" height="5.500" fill="#7fba00"/><rect x="9" y="16.500" width="5.500" height="5.500" fill="#00a4ef"/><rect x="15.500" y="16.500" width="5.500" height="5.500" fill="#ffb900"/></svg></span>
  <span class="tico"><svg viewBox="0 0 30 30"><rect width="30" height="30" fill="#fff"/><path d="M9 3H22V8H14V12H20" fill="none" stroke="#e88a45" stroke-width="3"/><path d="M9 28V18A6 6 0 0 1 21 18V28" fill="none" stroke="#e88a45" stroke-width="3"/><rect x="10" y="6" width="10" height="3" fill="#888"/></svg></span>
  <span class="tico dot"><svg class="chrome" viewBox="0 0 38 38"><circle cx="15" cy="23" r="15" fill="#e8453c"/><path d="M15 38A15 15 0 0 0 30 23H15Z" fill="#fbbc05"/><path d="M2 30A15 15 0 0 0 15 38L22 23L9 23Z" fill="#34a853"/><circle cx="15" cy="23" r="7" fill="#fff"/><circle cx="15" cy="23" r="5.500" fill="#4285f4"/><ellipse cx="27" cy="11" rx="9" ry="11" fill="#111"/><ellipse cx="27" cy="8" rx="3" ry="4" fill="#999"/></svg></span>
  <span class="tico dot"><svg viewBox="0 0 30 30"><rect width="30" height="30" fill="#0a78d4"/><rect x="16" width="12" height="30" fill="#d79b0a"/><rect x="8" y="8" width="12" height="22" fill="#f2c811"/><rect x="3" y="18" width="10" height="12" fill="#ffe27a"/></svg></span>
  <span class="tico dot"><svg viewBox="0 0 30 30"><path d="M4 2L14 6V30L4 26Z" fill="#f2cf6b"/><path d="M11 21A5 5 0 0 1 20 16A6 6 0 0 1 28 23A3 3 0 0 1 25 27H12A3 3 0 0 1 11 21Z" fill="#1f8fe0"/></svg></span>
  <span class="tico xlon"><svg viewBox="0 0 30 30"><rect x="7" width="23" height="30" rx="2" fill="#21a366"/><rect x="18" width="12" height="10" fill="#33c481"/><rect x="7" y="20" width="23" height="10" fill="#185c37"/><rect x="18" y="10" width="12" height="10" fill="#107c41"/><rect y="7" width="16" height="16" rx="1.500" fill="#107c41"/><path d="M4 10.500L11 19.500M11 10.500L4 19.500" stroke="#fff" stroke-width="2"/></svg><i></i></span>
  <div class="tray">
    <span class="t-w40"><svg class="tr-chev" viewBox="0 0 14 8"><path d="M1 7L7 1L13 7" fill="none" stroke="#111" stroke-width="1.300"/></svg></span>
    <span class="t-w40"><svg class="tr-cloud" viewBox="0 0 22 14"><path d="M5 13A4 4 0 0 1 4 5.500A6 6 0 0 1 15 4A4.500 4.500 0 0 1 18 13Z" fill="#9f9f9f" stroke="#222"/><path d="M2 11L12 8L20 11V13H4Z" fill="#ddd"/></svg></span>
    <span class="t-w40"><svg class="tr-sync" viewBox="0 0 22 22"><path d="M2 9A8 8 0 0 1 17 5M15 1L18 5L13 6M19 14A8 8 0 0 1 4 18M8 16L3 17L5 21" fill="none" stroke="#222" stroke-width="1.100"/><circle cx="16" cy="15" r="5" fill="#f7a400"/></svg></span>
    <span class="lang">ENG<br>IN</span>
    <span class="t-wifi"><svg viewBox="0 0 22 16"><path d="M1 6A14 14 0 0 1 21 6M4.500 9A9 9 0 0 1 17.500 9M8 12A4 4 0 0 1 14 12" fill="none" stroke="#111" stroke-width="1.200"/><circle cx="11" cy="14.500" r="1.300" fill="#111"/></svg></span>
    <span class="t-spk"><svg viewBox="0 0 22 16"><path d="M1 5V11H4L9 15V1L4 5Z" fill="none" stroke="#111"/><path d="M12 4A6 6 0 0 1 12 12M15 2A9 9 0 0 1 15 14M18 0.500A12 12 0 0 1 18 15.500" fill="none" stroke="#111"/></svg></span>
    <span class="t-bat"><svg viewBox="0 0 22 16"><path d="M1 4H18V13H1ZM18 6H21V11H18Z" fill="none" stroke="#111" stroke-width="1.200"/><path d="M3 6H9V11H3Z" fill="#111"/><path d="M7 0L4 8H8L6 14L11 6H8Z" fill="#111" stroke="#cfe5ed" stroke-width=".5"/></svg></span>
    <span class="clock">3:09 PM<br>4/12/2025</span>
  </div>
</footer>
</body>
</html>
```

FILE: styles.css
```css
* { box-sizing: border-box; }
html, body { margin: 0; height: 100%; }
body {
  width: 1920px; height: 1080px; overflow: hidden;
  display: flex; flex-direction: column;
  font-family: "Noto Sans", "Open Sans", sans-serif;
  font-size: 14px; color: #262626;
  background: linear-gradient(90deg, #e8eef3 0%, #ebedf1 55%, #efeaf0 100%);
}
.defs { position: absolute; width: 0; height: 0; }

/* Title bar */
.titlebar { height: 64px; flex: none; display: flex; }
.qat { width: 741px; display: flex; align-items: center; padding: 0 0 4px 20px; }
.qat svg { display: block; flex: none; }
.q-xl { width: 20px; height: 20px; }
.q-save { width: 20px; height: 20px; margin-left: 20px; }
.q-undo { width: 20px; height: 25px; margin-left: 15px; }
.q-chev { width: 8px; height: 5px; margin-left: 7px; }
.q-redo { width: 20px; height: 25px; margin-left: 9px; }
.q-chev2 { margin-left: 7px; }
.q-cust { width: 9px; height: 10px; margin-left: 22px; }
.doc-title { margin-left: 20px; font-size: 14.150px; white-space: nowrap; }
.searchbox {
  width: 460px; height: 40px; margin: 10px 0 0 -1px;
  display: flex; align-items: center; padding: 0 0 2px 16px;
  background: #f7f8f9; border-radius: 4px; border: 1px solid #e2e4e7; border-bottom: 2px solid #cfd2d6;
  color: #5c5c5c; font-size: 16px;
}
.searchbox svg { width: 20px; height: 20px; margin-right: 14px; }
.winctl { flex: 1; display: flex; justify-content: flex-end; align-items: center; padding-bottom: 4px; }
.avatar {
  width: 30px; height: 30px; border-radius: 50%; background: #736d6d; color: #f1f1f1;
  font-size: 12.500px; display: flex; align-items: center; justify-content: center; margin-right: 15px;
}
.wbtn { width: 60px; display: flex; justify-content: center; }
.wbtn svg { width: 14px; height: 14px; }

/* Tabs */
.tabrow { height: 36px; flex: none; display: flex; align-items: center; gap: 24px; padding: 0 18px 2px 27px; font-size: 15.900px; }
.tabrow .file { margin-right: 8px; }
.tabrow .cur { font-weight: 600; position: relative; color: #1f1f1f; }
.tabrow .cur::after { content: ""; position: absolute; left: 0; right: 0; bottom: -4px; height: 3px; background: #107c41; border-radius: 2px; }
.share {
  margin-left: auto; width: 90px; height: 30px; background: #107c41; color: #fff; border-radius: 4px;
  display: flex; align-items: center; gap: 6px; padding-left: 6px; font-size: 16px;
}
.share svg { width: 15px; height: 15px; }
.share .s-chev { width: 8px; height: 6px; }
.comment { width: 22px; height: 22px; margin-left: -8px; }

/* Ribbon */
.ribbon {
  height: 124px; flex: none; margin: 0 10px; background: #fff; border-radius: 10px;
  box-shadow: 0 2px 4px rgba(0,0,0,.16);
  display: flex; padding-top: 6px; position: relative;
}
.grp { height: 111px; display: flex; flex-direction: column; border-right: 1px solid #d6d6d6; }
.g1 { width: 442px; padding-left: 10px; }
.g2 { width: 268px; padding-left: 6px; }
.g3 { width: 280px; padding-left: 9px; }
.g4 { width: 451px; padding-left: 12px; }
.g5 { width: 155px; padding-left: 8px; }
.g6 { width: 231px; padding-left: 7px; }
.grp-body { flex: 1; display: flex; padding-top: 4px; }
.grp-name { height: 17px; line-height: 17px; font-size: 12.500px; text-align: center; margin: 0 0 -4px -6px; color: #333; position: relative; white-space: nowrap; }
.g6 .grp-name { margin-right: 20px; }
.btn { flex: none; display: flex; flex-direction: column; align-items: center; text-align: center; line-height: 20px; white-space: nowrap; }
.btn span { margin-top: 3px; }
.btn.lo span, .btn.lo3 span { margin-top: 6px; }
.btn.lo2 span { margin-top: 5px; }
.b50 { width: 50px; } .b55 { width: 55px; } .b56 { width: 56px; } .b60 { width: 60px; } .b61 { width: 61px; }
.b63 { width: 63px; } .b65 { width: 65px; } .b68 { width: 68px; } .b70 { width: 70px; } .b75 { width: 75px; }
.b79 { width: 79px; } .b82 { width: 82px; } .b94 { width: 94px; }
.vsep { flex: none; width: 1px; background: #dcdcdc; }
.s-a { height: 52px; margin: 3px 3px 0 3px; }
.s-b { height: 78px; margin: 3px 7px 0 7px; }
.i { width: 44px; height: 38px; display: block; flex: none; fill: none; stroke: #727272; stroke-width: 1.500; }
.sorti text { stroke: none; }
.si { width: 21px; height: 20px; flex: none; display: block; fill: none; stroke: #6f6f6f; stroke-width: 1.200; }
.w { fill: #fff; }
.thick { stroke: #6e6e6e; stroke-width: 2; }
.bl { stroke: #2a8fd6; }
.or { stroke: #e8812f; fill: #fff; }
.gr { stroke: #2aa866; stroke-width: 2; }
.fg { fill: #8c8c8c; stroke: none; }
.fg2 { fill: #c0c0c0; }
.fd { fill: #555; stroke: none; }
.fl { fill: #7fb9ea; stroke: none; }
.fbl { fill: #2a8fd6; stroke: none; }
.lt { stroke: #bfbfbf; }
.tb, .td { font-size: 13px; font-family: "Noto Sans", sans-serif; stroke: none; }
.tb { fill: #2a8fd6; }
.td { fill: #444; }
.chev { width: 8px; height: 5px; fill: none; stroke: #333; stroke-width: 1.200; vertical-align: 2px; }
.smalls { display: flex; flex-direction: column; gap: 12px; margin-top: -1px; }
.g2 .smalls { margin-left: 4px; }
.g3 .smalls { margin-left: 9px; }
.sm { height: 20px; display: flex; align-items: center; gap: 6px; white-space: nowrap; }
.sm.off { color: #a6a6a6; }
.sortcol { width: 30px; flex: none; display: flex; flex-direction: column; align-items: center; gap: 18px; padding-top: 8px; }
.sz { width: 24px; height: 22px; fill: none; stroke: none; flex: none; overflow: visible; }
.outl { display: flex; flex-direction: column; gap: 12px; margin-left: 6px; }
.launch { position: absolute; right: -18px; top: 4px; width: 10px; height: 10px; }
.collapse { position: absolute; right: 11px; bottom: 13px; width: 13px; height: 8px; }

/* Formula bar */
.fbar { height: 48px; flex: none; display: flex; align-items: flex-start; padding: 10px 10px 0; }
.namebox, .fxbox, .finput { height: 30px; background: #fff; border: 1px solid #dcdfe3; border-radius: 5px; display: flex; align-items: center; }
.namebox { width: 126px; padding: 0 8px 0 6px; justify-content: space-between; font-size: 15px; }
.namebox svg { width: 12px; height: 7px; }
.kebab { width: 4px; height: 16px; margin: 7px 11px 0 11px; }
.fxbox { width: 91px; gap: 11px; padding-left: 7px; margin-right: 6px; }
.fxbox svg { width: 16px; height: 16px; }
.fxbox span { font-family: "Liberation Serif", serif; font-style: italic; font-size: 20px; color: #333; }
.finput { flex: 1; justify-content: flex-end; padding-right: 5px; }
.finput svg { width: 14px; height: 8px; }

/* Sheet */
.sheet { height: 681px; flex: none; display: flex; }
.sheetmain { width: 1894px; display: flex; flex-direction: column; background: #fff; }
.colhead { height: 23px; flex: none; display: flex; background: #f0f0f0; border-bottom: 1px solid #a9a9a9; font-size: 15px; color: #444; }
.corner { width: 34px; flex: none; display: flex; justify-content: flex-end; align-items: flex-end; padding: 0 4px 2px 0; border-right: 1px solid #d9d9d9; }
.corner svg { width: 14px; height: 14px; }
.colhead span { width: 80px; flex: none; text-align: center; line-height: 23px; border-right: 1px solid #d9d9d9; }
.colhead .rest { width: 20px; border-right: 0; }
.colhead .sel { background: #e1e1e1; color: #107c41; border-bottom: 2px solid #107c41; height: 23px; }
.bodyrow { flex: 1; display: flex; min-height: 0; }
.rowhead { width: 34px; flex: none; background: #f0f0f0; overflow: hidden; border-right: 1px solid #a9a9a9; font-size: 15px; color: #444; }
.rowhead span { display: block; height: 24px; line-height: 25px; text-align: center; border-bottom: 1px solid #d9d9d9; margin-left: 3px; }
.rowhead .sel { margin-left: 0; background: #e1e1e1; color: #107c41; box-shadow: inset -2px 0 0 #107c41; }
.cells {
  flex: 1; position: relative; overflow: hidden; background-color: #fff;
  background-image:
    linear-gradient(90deg, transparent 79px, #e1e1e1 79px),
    linear-gradient(180deg, transparent 23px, #e1e1e1 23px);
  background-size: 80px 24px;
}
.greypanel { position: absolute; left: 0; top: 0; width: 1520px; height: 649px; background: #d0cece; }
.chart { position: absolute; left: 0; top: 0; width: 1459px; height: 591px; background: #4472c4; display: block; }
.edge { fill: none; stroke: #fff; stroke-opacity: .16; stroke-width: 8; }
.base { stroke: #fff; stroke-opacity: .22; stroke-width: 1; }
.vals text { font-family: Lato, "Noto Sans", sans-serif; font-weight: 700; font-size: 13.500px; fill: #fff; text-anchor: middle; }
.dates text { font-family: Lato, "Noto Sans", sans-serif; font-weight: 400; font-size: 13px; fill: #fff; text-anchor: middle; }
.note { position: absolute; left: 399px; top: 592px; font-size: 20.200px; line-height: 28px; color: #111; white-space: nowrap; }
.cellsel { position: absolute; left: 398px; top: 599px; width: 83px; height: 27px; border: 2px solid #1d7044; box-shadow: inset 0 0 0 1px #fff; }
.cellsel i { position: absolute; right: -4px; bottom: -4px; width: 7px; height: 7px; background: #1d7044; border: 1px solid #fff; }

/* Vertical scrollbar */
.vscroll { width: 23px; flex: none; display: flex; flex-direction: column; align-items: center; padding: 4px 0 4px; margin: 0 2px 0 1px; background: #f6f7f8; border-radius: 10px; gap: 4px; }
.vscroll svg { width: 12px; height: 8px; flex: none; }
.vthumb { width: 11px; height: 597px; border-radius: 6px; background: #6f6f6f; margin-bottom: auto; }

/* Sheet tabs */
.sheettabs { height: 40px; flex: none; display: flex; align-items: flex-start; font-size: 16.500px; background: linear-gradient(90deg, #ebe7e3 0%, #ebe7e2 50%, #e2e9ec 100%); white-space: nowrap; }
.tabnav { width: 135px; height: 40px; flex: none; display: flex; align-items: center; padding: 0 0 2px 32px; gap: 33px; }
.tabnav svg { width: 8px; height: 14px; }
.stab { height: 32px; margin-top: 5px; line-height: 32px; padding: 0 17px; border-right: 1px solid #d6d3cf; flex: none; }
.stab.t2 { padding: 0 17px; border-right: 0; }
.stab.active { width: 196px; height: 35px; margin: 0 5px 0 6px; padding: 0 5px; background: #fff; border: 0; border-radius: 0 0 7px 7px; line-height: 31px; text-align: center; position: relative; font-size: 16.900px; }
.stab.active b { font-weight: 500; display: inline-block; border-bottom: 3px solid #107c41; line-height: 27px; padding-top: 3px; }
.stab.t4 { padding: 0 18px 0 18px; border-left: 1px solid #d6d3cf; }
.stab.t5 { padding: 0 18px; border: 0; }
.more { font-size: 11px; margin: 10px 0 0 2px; letter-spacing: -.5px; color: #333; }
.plus { width: 14px; height: 14px; margin: 11px 0 0 27px; }
.kebab2 { width: 4px; height: 15px; margin: 12px 0 0 32px; }
.hscroll { width: 721px; height: 21px; margin: 9px 0 0 19px; background: #f4f5f5; border-radius: 10px; display: flex; align-items: center; padding: 0 6px; }
.hscroll svg { width: 7px; height: 11px; flex: none; }
.hthumb { width: 649px; height: 11px; margin: 0 auto 0 8px; background: #6f6f6f; border-radius: 6px; }

/* Status bar */
.status { height: 27px; flex: none; display: flex; align-items: center; background: #f3f3f3; border-bottom: 1px solid #bdb8b3; font-size: 12.500px; }
.ready { margin-left: 14px; }
.acc { width: 19px; height: 18px; margin-left: 24px; }
.accx { margin-left: 4px; font-weight: 600; }
.views { margin-left: auto; display: flex; height: 100%; }
.view { width: 50px; display: flex; align-items: center; justify-content: center; }
.view.on { background: #e0e0e0; }
.view svg { width: 18px; height: 16px; }
.zoomer { display: flex; align-items: center; margin-left: 7.500px; padding-right: 9.500px; }
.zm { width: 9px; height: 1px; background: #444; margin-right: 7px; }
.ztrack { width: 125px; height: 1px; background: #555; position: relative; margin-right: 6px; }
.ztrack i { position: absolute; left: 59px; top: -7px; width: 6px; height: 14px; background: #666; }
.zoomer svg { width: 10px; height: 10px; }
.zoomer span { margin-left: 16.500px; color: #555; font-size: 12.500px; }

/* Taskbar */
.taskbar {
  height: 60px; flex: none; display: flex; align-items: center;
  background: linear-gradient(90deg, #ecdfd1 0%, #efe2d3 40%, #eadcd3 72%, #e9dcd4 78%, #cfe4ec 81%, #cce4ee 100%);
}
.weather { width: 516px; flex: none; display: flex; align-items: center; padding-left: 25px; position: relative; }
.wx { width: 33px; height: 33px; }
.badge { position: absolute; left: 39px; top: -1px; width: 20px; height: 20px; border-radius: 50%; background: #c4261d; color: #fff; font-size: 12px; line-height: 20px; text-align: center; }
.wtxt { display: flex; flex-direction: column; margin-left: 6px; line-height: 20px; font-size: 14px; }
.wsub { color: #555; }
.tico { width: 55px; height: 60px; flex: none; display: flex; align-items: center; justify-content: center; position: relative; }
.tico svg { width: 30px; height: 30px; }
.tico .chrome { width: 37px; height: 37px; margin: -8px 0 0 6px; }
.tico.dot::after { content: ""; position: absolute; left: 24px; bottom: 6px; width: 7px; height: 4px; border-radius: 2px; background: #7a7a7a; }
.tsearch { width: 273px; height: 38px; margin: 0 3px 0 5px; flex: none; display: flex; align-items: center; padding-left: 13px; background: #faf6ef; border-radius: 19px; font-size: 15.500px; color: #555; position: relative; box-shadow: 0 1px 1px rgba(0,0,0,.12); overflow: hidden; }
.tsearch > svg { width: 20px; height: 20px; margin-right: 13px; }
.space { margin-left: auto; width: 66px; height: 38px; }
.space svg { width: 66px; height: 38px; display: block; }
.xlon::before { content: ""; position: absolute; left: 3px; right: 3px; top: 6px; bottom: 6px; background: #f5ece3; border-radius: 5px; z-index: 0; }
.xlon svg { position: relative; }
.xlon i { position: absolute; left: 18px; bottom: 7px; width: 19px; height: 3px; border-radius: 2px; background: #0a78d4; }
.tray { margin-left: auto; display: flex; align-items: center; padding-right: 24px; font-size: 14.500px; color: #222; }
.t-w40 { width: 40px; display: flex; justify-content: center; }
.tr-chev { width: 13px; height: 8px; }
.tr-cloud { width: 20px; height: 13px; }
.tr-sync { width: 21px; height: 21px; }
.lang { width: 56px; text-align: center; line-height: 20px; margin-right: 2px; }
.t-wifi { width: 34px; display: flex; justify-content: center; }
.t-spk { width: 26px; display: flex; justify-content: center; }
.t-bat { width: 34px; display: flex; justify-content: center; }
.t-wifi svg, .t-spk svg, .t-bat svg { width: 20px; height: 15px; }
.clock { width: 83px; text-align: right; line-height: 20px; }
```
